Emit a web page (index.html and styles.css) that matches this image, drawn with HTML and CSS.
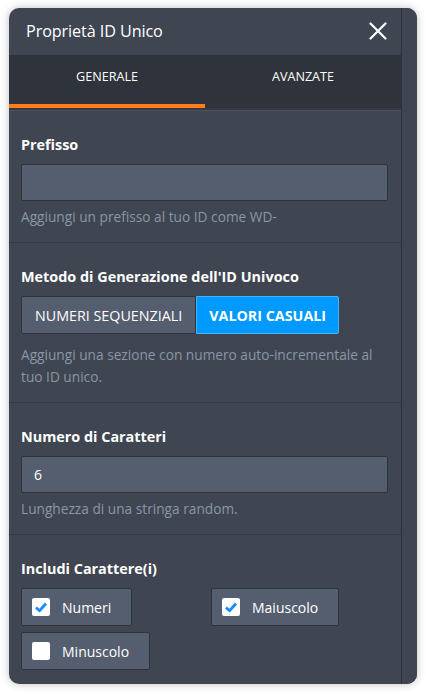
FILE: index.html
```html
<!DOCTYPE html>
<html lang="it">
<head>
<meta charset="utf-8">
<title>Proprietà ID Unico</title>
<link rel="stylesheet" href="styles.css">
</head>
<body>
<div class="panel">
  <div class="main">
    <header class="header">
      <h1 class="title">Proprietà ID Unico</h1>
      <button class="close" aria-label="Chiudi">
        <svg width="18" height="18" viewBox="0 0 18 18"><path d="M1.5 1.5 L16.5 16.5 M16.5 1.5 L1.5 16.5" stroke="#fff" stroke-width="2.2" stroke-linecap="round"/></svg>
      </button>
    </header>
    <nav class="tabs">
      <div class="tab active">GENERALE</div>
      <div class="tab">AVANZATE</div>
    </nav>
    <div class="body">
      <section class="section">
        <div class="label">Prefisso</div>
        <div class="input"></div>
        <p class="hint">Aggiungi un prefisso al tuo ID come WD-</p>
      </section>
      <section class="section">
        <div class="label">Metodo di Generazione dell'ID Univoco</div>
        <div class="toggle">
          <div class="opt">NUMERI SEQUENZIALI</div>
          <div class="opt on">VALORI CASUALI</div>
        </div>
        <p class="hint hint-wide">Aggiungi una sezione con numero auto-incrementale al tuo ID unico.</p>
      </section>
      <section class="section">
        <div class="label">Numero di Caratteri</div>
        <div class="input">6</div>
        <p class="hint">Lunghezza di una stringa random.</p>
      </section>
      <section class="section last">
        <div class="label">Includi Carattere(i)</div>
        <div class="checks">
          <div class="check">
            <svg class="box" width="18" height="18" viewBox="0 0 18 18"><rect width="18" height="18" rx="2" fill="#fff"/><path d="M4 9.5 L7.5 12.8 L14 5.5" fill="none" stroke="#1a8cff" stroke-width="2.8" stroke-linejoin="round"/></svg>
            <span>Numeri</span>
          </div>
          <div class="check">
            <svg class="box" width="18" height="18" viewBox="0 0 18 18"><rect width="18" height="18" rx="2" fill="#fff"/><path d="M4 9.5 L7.5 12.8 L14 5.5" fill="none" stroke="#1a8cff" stroke-width="2.8" stroke-linejoin="round"/></svg>
            <span>Maiuscolo</span>
          </div>
          <div class="check">
            <svg class="box" width="18" height="18" viewBox="0 0 18 18"><rect width="18" height="18" rx="2" fill="#fff"/></svg>
            <span>Minuscolo</span>
          </div>
        </div>
      </section>
    </div>
  </div>
  <div class="scrollbar"></div>
</div>
</body>
</html>
```
FILE: styles.css
```css
* { box-sizing: border-box; }
html, body { margin: 0; padding: 0; background: #ffffff; }
body { font-family: "Open Sans", "Noto Sans", sans-serif; }

.panel {
  margin: 8px 9px;
  width: 408px;
  height: 676px;
  border-radius: 10px;
  overflow: hidden;
  background: #3f4652;
  box-shadow: 0 0 8px rgba(0,0,0,0.25);
  display: flex;
}
.main { width: 392px; display: flex; flex-direction: column; }
.scrollbar { width: 16px; border-left: 1px solid #2e333b; background: #3f4652; }

.header {
  height: 47px;
  display: flex;
  align-items: center;
  justify-content: space-between;
  padding: 0 14px 0 17px;
}
.title { margin: 0; font-size: 16.2px; font-weight: 400; color: #fff; letter-spacing: -0.1px; }
.close { background: none; border: 0; padding: 0; width: 18px; height: 18px; display: flex; }

.tabs {
  display: flex;
  background: #2f333b;
  height: 56px;
  border-bottom: 2px solid #353a43;
}
.tab {
  flex: 1;
  display: flex;
  align-items: center;
  justify-content: center;
  color: #fff;
  font-size: 12.6px;
  font-weight: 500;
  padding-bottom: 6px;
  border-bottom: 4px solid transparent;
}
.tab.active { border-bottom-color: #ff7d1a; }

.body { border-top: 1px solid #4a5260; }
.section { padding: 24px 13px 14px 12px; border-bottom: 1px solid #353b45; }
.section.last { border-bottom: 0; }

.label { font-size: 14.4px; font-weight: 700; color: #fff; line-height: 20px; margin-bottom: 9px; }
.input {
  height: 37px;
  background: #545e6f;
  border: 1px solid #2f343c;
  border-radius: 2px;
  color: #fff;
  font-size: 14px;
  display: flex;
  align-items: center;
  padding-left: 12px;
}
.hint { margin: 5px 0 0; color: #8a95a6; font-size: 13.7px; line-height: 22px; }
.hint-wide { margin-top: 10px; }

.toggle { display: flex; }
.opt {
  height: 38px;
  display: flex;
  align-items: center;
  padding: 0 13px;
  font-size: 14.3px;
  color: #fff;
  background: #545e6f;
  border: 1px solid #2f343c;
  border-radius: 2px 0 0 2px;
}
.opt.on {
  background: #0099ff;
  border-color: #48b2ff;
  font-weight: 700;
  padding: 0 12px;
  border-radius: 0 2px 2px 0;
}

.checks {
  display: grid;
  grid-template-columns: 190px 1fr;
  row-gap: 6px;
  justify-items: start;
}
.check {
  height: 38px;
  display: flex;
  align-items: center;
  padding: 0 20px 0 10px;
  background: #545e6f;
  border: 1px solid #2f343c;
  border-radius: 2px;
  color: #fff;
  font-size: 14px;
}
.box { margin-right: 12px; flex: none; }
```
